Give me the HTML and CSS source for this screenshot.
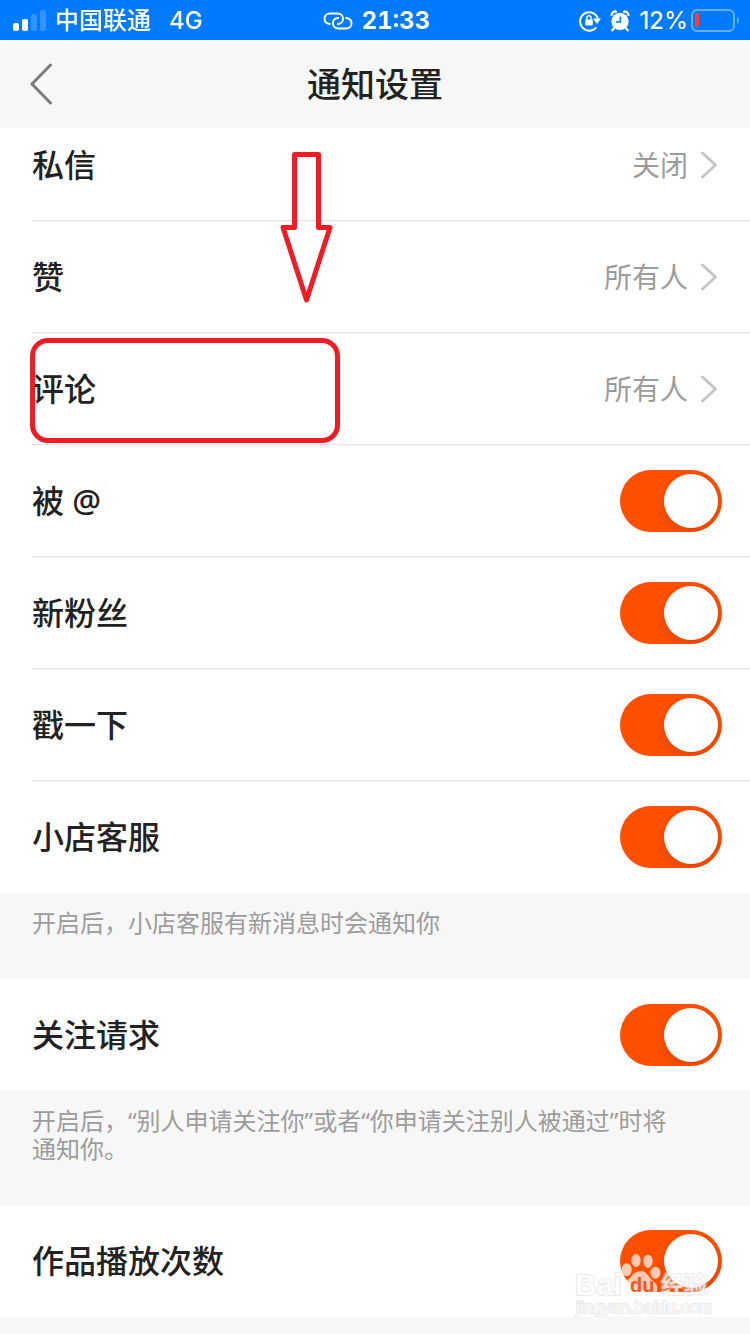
FILE: index.html
```html
<!DOCTYPE html>
<html lang="zh-CN">
<head>
  <meta charset="UTF-8">
  <meta name="viewport" content="width=device-width, initial-scale=1.0">
  <title>通知设置</title>
  <link rel="stylesheet" href="styles.css">
</head>
<body>
  <!-- Status bar -->
  <div class="status-bar">
    <div class="status-left">
      <svg class="signal" width="34" height="22" viewBox="0 0 34 22" fill="#fff" aria-hidden="true">
        <rect x="0" y="13" width="6" height="8" rx="2"/>
        <rect x="9" y="9" width="6" height="12" rx="2"/>
        <rect x="18" y="4" width="6" height="17" rx="2" opacity="0.2"/>
        <rect x="27" y="0" width="6" height="21" rx="2" opacity="0.2"/>
      </svg>
      <span class="carrier">中国联通</span>
      <span>4G</span>
    </div>
    <div class="status-center">
      <svg width="30" height="18" viewBox="0 0 30 18" fill="none" stroke="#fff" stroke-width="2" stroke-linecap="round" aria-hidden="true">
        <path d="M6.8 12C3.5 11.6 1.5 9.6 1.5 6.8C1.5 3.8 3.8 1.5 7.2 1.5H14.4C17.8 1.5 20 3.8 20 6.8C20 9.8 17.8 12 14.8 12"/>
        <path d="M23.2 6C26.5 6.4 28.5 8.4 28.5 11.2C28.5 14.2 26.2 16.5 22.8 16.5H15.6C12.2 16.5 10 14.2 10 11.2C10 8.2 12.2 6 15.2 6"/>
      </svg>
      <span class="clock">21:33</span>
    </div>
    <div class="status-right">
      <svg width="22" height="22" viewBox="0 0 22 22" aria-hidden="true">
        <path d="M19 8.5A9.2 9.2 0 1 0 17.4 17.3" fill="none" stroke="#fff" stroke-width="2"/>
        <path d="M13.8 8.4H22L18 14Z" fill="#fff"/>
        <rect x="6.2" y="9.4" width="7.6" height="6.2" rx="1" fill="#fff"/>
        <path d="M7.9 10V7.8A2.1 2.1 0 0 1 12.1 7.8V10" fill="none" stroke="#fff" stroke-width="1.4"/>
      </svg>
      <svg width="20" height="22" viewBox="0 0 20 22" aria-hidden="true">
        <circle cx="10" cy="11.4" r="8.6" fill="#fff"/>
        <path d="M1.6 4.8A4 4 0 0 1 6 1.6M18.4 4.8A4 4 0 0 0 14 1.6" fill="none" stroke="#fff" stroke-width="2.4" stroke-linecap="round"/>
        <path d="M4.4 17.8L2.2 20.4M15.6 17.8L17.8 20.4" stroke="#fff" stroke-width="2.2" stroke-linecap="round"/>
        <path d="M10.4 6.4V12H6" fill="none" stroke="#007aff" stroke-width="1.6"/>
      </svg>
      <span>12%</span>
      <svg class="battery" width="49" height="24" viewBox="0 0 49 24" aria-hidden="true">
        <rect x="1" y="1" width="42" height="21" rx="5" fill="none" stroke="#fff" stroke-width="2" opacity="0.4"/>
        <path d="M46 8C48.6 9.4 48.6 13.6 46 15Z" fill="#fff" opacity="0.4"/>
        <rect x="4" y="4" width="4" height="14" rx="2" fill="#ff3b30"/>
      </svg>
    </div>
  </div>

  <header class="nav-bar">
    <button class="back" type="button" aria-label="返回">
      <svg width="24" height="42" viewBox="0 0 24 42" fill="none" stroke="#7b7b7b" stroke-width="3" stroke-linecap="round" stroke-linejoin="round">
        <path d="M20.5 2L2 21L20.5 40"/>
      </svg>
    </button>
    <h1>通知设置</h1>
  </header>

  <main>
    <div class="group group-first">
      <a class="row" href="#message">
        <span class="label">私信</span>
        <span class="value">关闭</span>
        <svg class="chevron" viewBox="0 0 22 28"><path d="M2.5 2L15.5 14L2.5 26"/></svg>
        <svg class="mark-arrow" width="54" height="152" viewBox="0 0 54 152" fill="none" stroke="#ee1c24" stroke-width="5" stroke-linejoin="round" aria-hidden="true">
          <path d="M14.5 2.5H38.5V75.5H50L26.5 148L3 75.5H14.5Z"/>
        </svg>
      </a>
      <a class="row" href="#like">
        <span class="label">赞</span>
        <span class="value">所有人</span>
        <svg class="chevron" viewBox="0 0 22 28"><path d="M2.5 2L15.5 14L2.5 26"/></svg>
      </a>
      <a class="row" href="#comment">
        <span class="label">评论</span>
        <span class="value">所有人</span>
        <svg class="chevron" viewBox="0 0 22 28"><path d="M2.5 2L15.5 14L2.5 26"/></svg>
        <span class="mark-box"></span>
      </a>
      <div class="row">
        <label class="label" for="at">被 @</label>
        <input class="switch" type="checkbox" id="at" checked>
      </div>
      <div class="row">
        <label class="label" for="fans">新粉丝</label>
        <input class="switch" type="checkbox" id="fans" checked>
      </div>
      <div class="row">
        <label class="label" for="poke">戳一下</label>
        <input class="switch" type="checkbox" id="poke" checked>
      </div>
      <div class="row">
        <label class="label" for="shop">小店客服</label>
        <input class="switch" type="checkbox" id="shop" checked>
      </div>
    </div>
    <p class="note">开启后，小店客服有新消息时会通知你</p>

    <div class="group">
      <div class="row">
        <label class="label" for="follow">关注请求</label>
        <input class="switch" type="checkbox" id="follow" checked>
      </div>
    </div>
    <p class="note">开启后，“别人申请关注你”或者“你申请关注别人被通过”时将通知你。</p>

    <div class="group">
      <div class="row">
        <label class="label" for="plays">作品播放次数</label>
        <input class="switch" type="checkbox" id="plays" checked>
        <!-- Watermark -->
        <svg class="watermark" width="140" height="70" viewBox="0 0 140 70">
          <g class="wm-text">
            <text class="wm-name" x="3" y="46">Bai</text>
            <text class="wm-cn" x="89" y="44">经验</text>
            <text class="wm-url" x="4" y="64">jingyan.baidu.com</text>
          </g>
          <g class="wm-paw">
            <ellipse cx="54.7" cy="20.7" rx="5" ry="6.5"/>
            <ellipse cx="64" cy="11.5" rx="4.7" ry="6.5"/>
            <ellipse cx="76" cy="12.2" rx="4.7" ry="6.5"/>
            <ellipse cx="83.4" cy="23.8" rx="5" ry="6"/>
            <path d="M69 22C74 22 76 27 80 31C84 34 86 37 85 42C84 46 80 47 76 46H58C53 47 50 44 50 39C50 34 55 33 58 29C61 25 64 22 69 22Z"/>
          </g>
          <text class="wm-du" x="58" y="43">du</text>
        </svg>
      </div>
    </div>
  </main>
</body>
</html>
```

FILE: styles.css
```css
* {
  margin: 0;
  padding: 0;
  box-sizing: border-box;
}

body {
  background: #f7f7f7;
  color: #222;
  font-family: "Noto Sans", "Noto Sans CJK SC", sans-serif;
  overflow-x: hidden;
}

svg {
  display: block;
  flex: none;
}

/* Status bar */
.status-bar {
  position: sticky;
  top: 0;
  z-index: 3;
  display: grid;
  grid-template-columns: 1fr auto 1fr;
  align-items: center;
  height: 40px;
  padding: 1px 10px 0 13px;
  background: #007aff;
  color: #fff;
  font-family: Inter, "Noto Sans CJK SC", sans-serif;
  font-size: 24px;
  font-weight: 500;
  line-height: 40px;
}

.status-left,
.status-center,
.status-right {
  display: flex;
  align-items: center;
}

.carrier {
  margin: 0 18px 0 8px;
}

.status-center {
  gap: 9px;
}

.clock {
  font-weight: 700;
  font-variant-numeric: tabular-nums;
}

.status-right {
  justify-content: flex-end;
  gap: 9px;
}

.battery {
  margin-left: -6px;
}

/* Title bar */
.nav-bar {
  position: sticky;
  top: 40px;
  z-index: 2;
  display: grid;
  grid-template-columns: 1fr auto 1fr;
  align-items: center;
  height: 88px;
  padding: 0 30px;
  background: #f7f7f7;
}

.back {
  justify-self: start;
  border: none;
  background: none;
  cursor: pointer;
}

h1 {
  padding-bottom: 4px;
  font-size: 34px;
  font-weight: 500;
}

/* Setting rows */
.group {
  padding-left: 32px;
  background: #fff;
}

/* the list is scrolled a little under the title bar */
.group-first {
  margin-top: -19px;
}

.row {
  position: relative;
  display: flex;
  align-items: center;
  height: 112px;
  padding-right: 28px;
  border-bottom: 1px solid #e0e0e0;
  color: inherit;
  text-decoration: none;
}

.row:last-child {
  border-bottom-color: transparent;
}

.label {
  flex: 1;
  padding-bottom: 4px;
  font-size: 32px;
  font-weight: 500;
}

.value {
  margin-right: 12px;
  padding-bottom: 2px;
  color: #9c9c9c;
  font-size: 28px;
}

.chevron {
  width: 22px;
  height: 28px;
  fill: none;
  stroke: #c6c6c6;
  stroke-width: 3;
  stroke-linecap: round;
  stroke-linejoin: round;
}

/* Switch */
.switch {
  appearance: none;
  width: 102px;
  height: 62px;
  padding: 4px;
  border-radius: 31px;
  background: #ddd;
  overflow: hidden;
  cursor: pointer;
}

.switch::before {
  content: "";
  display: block;
  width: 54px;
  height: 54px;
  border-radius: 50%;
  background: #fff;
  box-shadow: 0 4px 12px rgba(0, 0, 0, 0.15);
}

.switch:checked {
  background: #ff5000;
}

.switch:checked::before {
  margin-left: auto;
}

.note {
  padding: 16px 64px 42px 32px;
  color: #9c9c9c;
  font-size: 24px;
  line-height: 28px;
}

/* Red marks over the list */
.mark-arrow {
  position: absolute;
  top: 43px;
  left: 248px;
  z-index: 1;
}

.mark-box {
  position: absolute;
  top: 5px;
  left: -2px;
  width: 310px;
  height: 105px;
  border: 5px solid #ee1c24;
  border-radius: 18px;
}

/* Watermark */
.watermark {
  position: absolute;
  right: 38px;
  bottom: -3px;
  pointer-events: none;
  font-family: "Liberation Sans", "Noto Sans CJK SC", sans-serif;
}

.wm-text {
  fill: rgba(255, 255, 255, 0.75);
  stroke: rgba(210, 210, 210, 0.45);
  stroke-width: 2px;
  paint-order: stroke;
}

.wm-name {
  font-size: 30px;
  font-weight: 700;
}

.wm-cn {
  font-size: 23px;
  font-weight: 700;
}

.wm-url {
  font-size: 17px;
}

.wm-paw {
  fill: rgba(255, 255, 255, 0.7);
}

.wm-du {
  fill: #ee5a1c;
  font-size: 20px;
  font-weight: 700;
}
```
